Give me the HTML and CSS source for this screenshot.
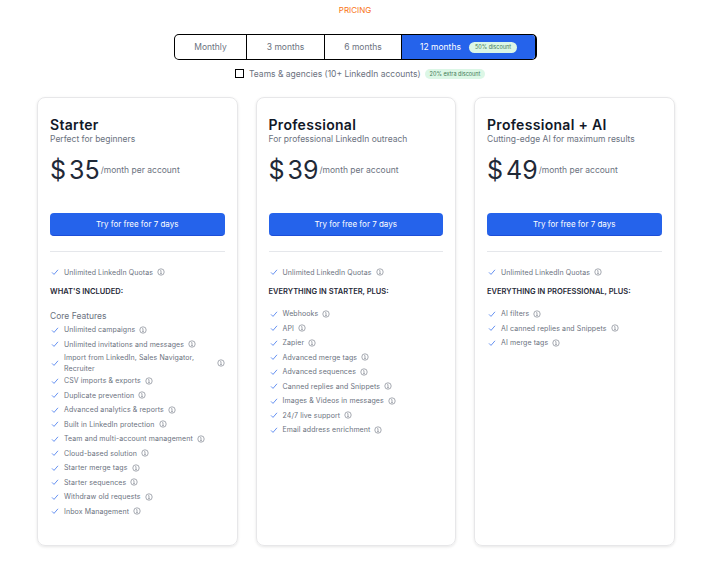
FILE: index.html
```html
<!DOCTYPE html>
<html lang="en">
<head>
    <meta charset="UTF-8">
    <title>Pricing</title>
    <link rel="stylesheet" href="styles.css">
</head>
<body>
    <svg class="icon-defs" width="0" height="0">
        <symbol id="check" viewBox="0 0 8 8"><path d="M1 4.4 3 6.4 7 1.8" fill="none" stroke="#2563eb" stroke-width="0.7"/></symbol>
        <symbol id="info" viewBox="0 0 8 8"><circle cx="4" cy="4" r="3.2" fill="none" stroke="#6b7280" stroke-width="0.6"/><path d="M3.3 2.6H4V5.6M3.2 5.6H4.8" fill="none" stroke="#6b7280" stroke-width="0.6"/></symbol>
    </svg>

    <div class="heading">PRICING</div>

    <div class="periods">
        <div class="period period-monthly">Monthly</div>
        <div class="period period-3">3 months</div>
        <div class="period period-6">6 months</div>
        <div class="period period-12 active">12 months <span class="badge">50% discount</span></div>
    </div>

    <div class="teams">
        <span class="checkbox"></span>
        <span>Teams &amp; agencies (10+ LinkedIn accounts)</span>
        <span class="extra">20% extra discount</span>
    </div>

    <div class="plans">
        <div class="card">
            <h2>Starter</h2>
            <p class="sub">Perfect for beginners</p>
            <div class="price"><span class="amount">$<i>35</i></span><span class="per">/month per account</span></div>
            <button class="try">Try for free for 7 days</button>
            <hr>
            <ul class="features quota">
                <li><svg class="chk"><use href="#check"/></svg><span>Unlimited LinkedIn Quotas</span><svg class="inf"><use href="#info"/></svg></li>
            </ul>
            <div class="included">WHAT'S INCLUDED:</div>
            <div class="core">Core Features</div>
            <ul class="features">
                <li><svg class="chk"><use href="#check"/></svg><span>Unlimited campaigns</span><svg class="inf"><use href="#info"/></svg></li>
                <li><svg class="chk"><use href="#check"/></svg><span>Unlimited invitations and messages</span><svg class="inf"><use href="#info"/></svg></li>
                <li class="wrap"><svg class="chk"><use href="#check"/></svg><span>Import from LinkedIn, Sales Navigator, Recruiter</span><svg class="inf"><use href="#info"/></svg></li>
                <li><svg class="chk"><use href="#check"/></svg><span>CSV imports &amp; exports</span><svg class="inf"><use href="#info"/></svg></li>
                <li><svg class="chk"><use href="#check"/></svg><span>Duplicate prevention</span><svg class="inf"><use href="#info"/></svg></li>
                <li><svg class="chk"><use href="#check"/></svg><span>Advanced analytics &amp; reports</span><svg class="inf"><use href="#info"/></svg></li>
                <li><svg class="chk"><use href="#check"/></svg><span>Built in LinkedIn protection</span><svg class="inf"><use href="#info"/></svg></li>
                <li><svg class="chk"><use href="#check"/></svg><span>Team and multi-account management</span><svg class="inf"><use href="#info"/></svg></li>
                <li><svg class="chk"><use href="#check"/></svg><span>Cloud-based solution</span><svg class="inf"><use href="#info"/></svg></li>
                <li><svg class="chk"><use href="#check"/></svg><span>Starter merge tags</span><svg class="inf"><use href="#info"/></svg></li>
                <li><svg class="chk"><use href="#check"/></svg><span>Starter sequences</span><svg class="inf"><use href="#info"/></svg></li>
                <li><svg class="chk"><use href="#check"/></svg><span>Withdraw old requests</span><svg class="inf"><use href="#info"/></svg></li>
                <li><svg class="chk"><use href="#check"/></svg><span>Inbox Management</span><svg class="inf"><use href="#info"/></svg></li>
            </ul>
        </div>

        <div class="card">
            <h2>Professional</h2>
            <p class="sub">For professional LinkedIn outreach</p>
            <div class="price"><span class="amount">$<i>39</i></span><span class="per">/month per account</span></div>
            <button class="try">Try for free for 7 days</button>
            <hr>
            <ul class="features quota">
                <li><svg class="chk"><use href="#check"/></svg><span>Unlimited LinkedIn Quotas</span><svg class="inf"><use href="#info"/></svg></li>
            </ul>
            <div class="included">EVERYTHING IN STARTER, PLUS:</div>
            <ul class="features extras">
                <li><svg class="chk"><use href="#check"/></svg><span>Webhooks</span><svg class="inf"><use href="#info"/></svg></li>
                <li><svg class="chk"><use href="#check"/></svg><span>API</span><svg class="inf"><use href="#info"/></svg></li>
                <li><svg class="chk"><use href="#check"/></svg><span>Zapier</span><svg class="inf"><use href="#info"/></svg></li>
                <li><svg class="chk"><use href="#check"/></svg><span>Advanced merge tags</span><svg class="inf"><use href="#info"/></svg></li>
                <li><svg class="chk"><use href="#check"/></svg><span>Advanced sequences</span><svg class="inf"><use href="#info"/></svg></li>
                <li><svg class="chk"><use href="#check"/></svg><span>Canned replies and Snippets</span><svg class="inf"><use href="#info"/></svg></li>
                <li><svg class="chk"><use href="#check"/></svg><span>Images &amp; Videos in messages</span><svg class="inf"><use href="#info"/></svg></li>
                <li><svg class="chk"><use href="#check"/></svg><span>24/7 live support</span><svg class="inf"><use href="#info"/></svg></li>
                <li><svg class="chk"><use href="#check"/></svg><span>Email address enrichment</span><svg class="inf"><use href="#info"/></svg></li>
            </ul>
        </div>

        <div class="card">
            <h2>Professional + AI</h2>
            <p class="sub">Cutting-edge AI for maximum results</p>
            <div class="price"><span class="amount">$<i>49</i></span><span class="per">/month per account</span></div>
            <button class="try">Try for free for 7 days</button>
            <hr>
            <ul class="features quota">
                <li><svg class="chk"><use href="#check"/></svg><span>Unlimited LinkedIn Quotas</span><svg class="inf"><use href="#info"/></svg></li>
            </ul>
            <div class="included">EVERYTHING IN PROFESSIONAL, PLUS:</div>
            <ul class="features extras">
                <li><svg class="chk"><use href="#check"/></svg><span>AI filters</span><svg class="inf"><use href="#info"/></svg></li>
                <li><svg class="chk"><use href="#check"/></svg><span>AI canned replies and Snippets</span><svg class="inf"><use href="#info"/></svg></li>
                <li><svg class="chk"><use href="#check"/></svg><span>AI merge tags</span><svg class="inf"><use href="#info"/></svg></li>
            </ul>
        </div>
    </div>
</body>
</html>
```

FILE: styles.css
```css
* {
    box-sizing: border-box;
}
body {
    margin: 0;
    height: 562px;
    overflow: hidden;
    background-color: #fff;
    font-family: 'Inter', 'Liberation Sans', sans-serif;
    color: #6b7280;
}
.icon-defs {
    position: absolute;
}
.heading {
    height: 34px;
    padding-top: 5px;
    padding-left: 2px;
    text-align: center;
    font-size: 8px;
    line-height: 10px;
    color: #f97316;
}
.periods {
    display: flex;
    width: 363px;
    height: 26px;
    margin-left: 174px;
    border: 1px solid #000;
    border-right-width: 2px;
    border-radius: 5px;
    overflow: hidden;
    font-size: 8.5px;
}
.period {
    display: flex;
    align-items: center;
    justify-content: center;
    border-right: 1px solid #000;
}
.period-monthly { width: 72px; }
.period-3 { width: 78px; }
.period-6 { width: 77px; }
.period-12 {
    flex: 1;
    border-right: 0;
    gap: 8px;
}
.active {
    background-color: #2563eb;
    color: #fff;
}
.badge {
    padding: 0 6px;
    height: 11px;
    line-height: 11px;
    border-radius: 6px;
    background-color: #dcf7e6;
    color: #3f7a55;
    font-size: 5.5px;
}
.teams {
    display: flex;
    align-items: center;
    height: 13px;
    margin: 7px 0 17px 235px;
    font-size: 8.5px;
}
.checkbox {
    width: 9px;
    height: 9px;
    margin-right: 5px;
    border: 1px solid #000;
}
.extra {
    margin-left: 4px;
    padding: 0 5px;
    height: 10px;
    line-height: 10px;
    border-radius: 5px;
    background-color: #dcf7e6;
    color: #3f7a55;
    font-size: 5.5px;
}
.plans {
    display: flex;
    gap: 18px;
    margin-left: 37px;
}
.card {
    width: 200.5px;
    height: 449px;
    padding: 12px 12px 0;
    border: 1px solid #e7e7e9;
    border-radius: 8px;
    box-shadow: 0 1px 3px rgba(0,0,0,0.1);
}
h2 {
    margin: 6px 0 0;
    font-size: 14px;
    line-height: 17px;
    font-weight: 600;
    letter-spacing: 0.3px;
    color: #111827;
}
.sub {
    margin: 0;
    font-size: 8.5px;
    line-height: 12px;
}
.price {
    display: flex;
    align-items: center;
    height: 32px;
    margin-top: 9px;
}
.amount {
    font-size: 25px;
    color: #1f2937;
}
.amount i {
    font-style: normal;
    margin-left: 3px;
}
.per {
    margin-left: 1px;
    font-size: 8.5px;
}
.try {
    display: block;
    width: 100%;
    height: 23px;
    margin-top: 27px;
    padding: 0;
    border: 0;
    border-bottom: 1px solid #1d4ed8;
    border-radius: 4px;
    background-color: #2563eb;
    color: #fff;
    font-family: inherit;
    font-size: 8px;
}
hr {
    margin: 15px 0 0;
    border: 0;
    border-top: 1px solid #e5e7eb;
}
.features {
    margin: 0;
    padding: 0;
    list-style: none;
}
.features li {
    display: flex;
    align-items: center;
    min-height: 14.5px;
    padding-left: 1px;
    font-size: 7px;
    line-height: 11px;
    letter-spacing: 0.1px;
}
.quota {
    margin-top: 13px;
}
.chk {
    flex: none;
    width: 8px;
    height: 8px;
    margin-right: 5px;
}
.inf {
    flex: none;
    width: 8px;
    height: 8px;
    margin-left: 4px;
}
.wrap span {
    flex: 1;
}
.included {
    margin-top: 6px;
    font-size: 7.5px;
    line-height: 12px;
    font-weight: 600;
    color: #1f2937;
}
.core {
    margin-top: 12px;
    margin-bottom: 1px;
    font-size: 8.5px;
    line-height: 12px;
}
.extras {
    margin-top: 9px;
}
```
